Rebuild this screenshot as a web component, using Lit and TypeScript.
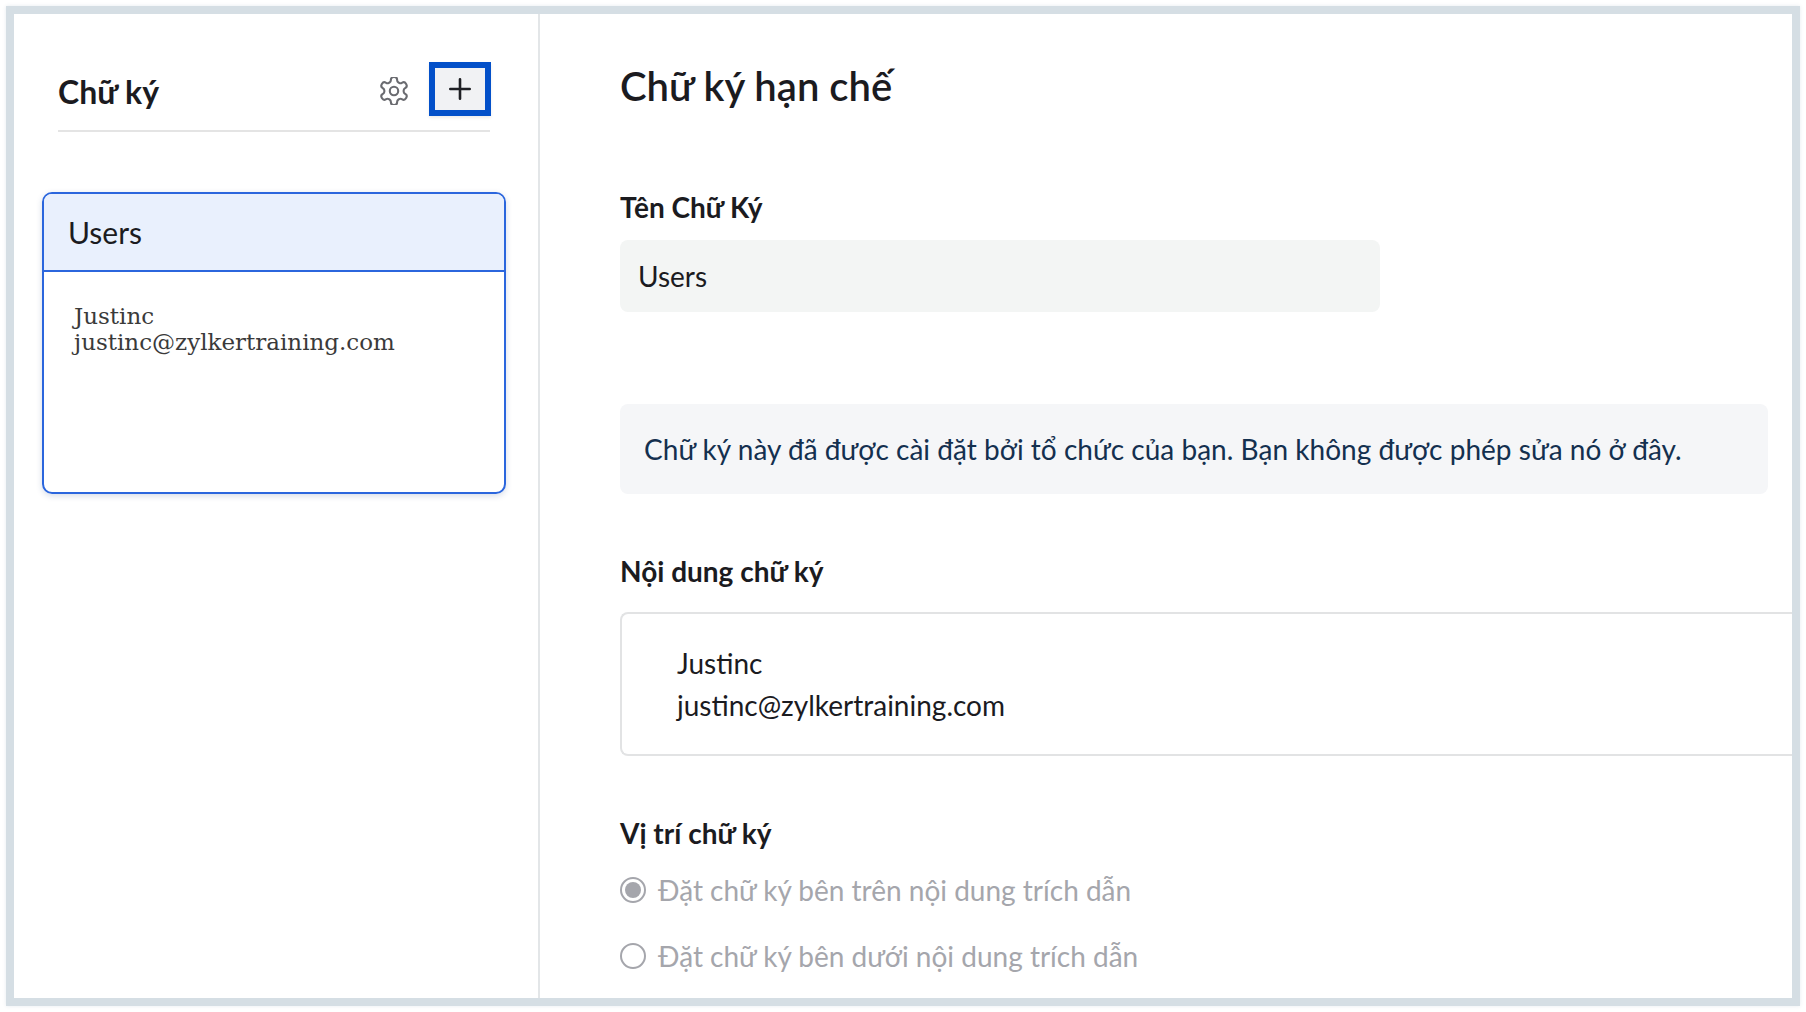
import { LitElement, html, css } from "lit";
import { customElement } from "lit/decorators.js";

@customElement("app-root")
export class AppRoot extends LitElement {
  static styles = css`
    :host { display: block; width: 1806px; height: 1012px; background: #fff; font-family: Lato, "Noto Sans", sans-serif; color: #1b1b1f; overflow: hidden; }
    * { box-sizing: border-box; }
    .page { width: 1806px; height: 1012px; padding: 6px; }
    .frame { width: 1794px; height: 1000px; border: 8px solid #d5dee4; display: flex; overflow: hidden; background: #fff; box-shadow: 0 0 4px rgba(213,222,228,.6); }
    .side { width: 526px; flex: none; border-right: 2px solid #e3e6e8; padding: 48px 32px 0 28px; }
    .side-head { margin: 0 16px; height: 70px; border-bottom: 2px solid #e4e4e4; display: flex; align-items: flex-start; }
    .side-title { font-size: 32px; line-height: 54px; font-weight: 700; flex: 1; margin-top: 3px; }
    .gear { width: 28px; height: 28px; margin: 15px 21px 0 0; display: block; }
    .add { width: 62px; height: 54px; margin-right: -1px; border: 6px solid #0350c9; background: #f1f2f4; display: flex; align-items: center; justify-content: center; box-shadow: 0 2px 3px rgba(0,0,0,.08); }
    .add svg { width: 22px; height: 22px; display: block; }
    .card { margin-top: 60px; height: 302px; border: 2px solid #2b66dd; border-radius: 10px; box-shadow: 0 2px 6px rgba(30,60,120,.18); overflow: hidden; width: 464px; }
    .card-head { height: 78px; background: #e9f0fd; border-bottom: 2px solid #2b66dd; padding-left: 24px; font-size: 30px; line-height: 76px; }
    .card-body { padding: 31px 0 0 30px; font-family: "DejaVu Serif", serif; font-size: 23px; line-height: 26px; color: #3a3a3a; }
    .main { flex: 1; min-width: 0; padding: 0 0 0 80px; }
    h1 { margin: 42px 0 0; font-size: 40px; line-height: 60px; font-weight: 600; }
    .label { font-size: 28px; line-height: 36px; font-weight: 700; }
    .l1 { margin-top: 73px; }
    .input { margin-top: 15px; width: 760px; height: 72px; background: #f3f5f4; border-radius: 8px; padding-left: 18px; font-size: 28px; line-height: 72px; }
    .notice { margin-top: 92px; width: 1148px; height: 90px; background: #f5f6f8; border-radius: 8px; padding-left: 24px; font-size: 28px; line-height: 90px; color: #14304f; white-space: nowrap; letter-spacing: .03px; }
    .l2 { margin-top: 59px; }
    .sig { margin-top: 23px; height: 144px; border: 2px solid #e2e3e4; border-right: 0; border-radius: 8px 0 0 8px; padding: 28px 0 0 55px; font-size: 28px; line-height: 42px; }
    .l3 { margin-top: 59px; }
    .radio { display: flex; align-items: center; color: #a5a6ac; font-size: 28px; line-height: 40px; gap: 12px; }
    .r1 { margin-top: 19px; }
    .r2 { margin-top: 26px; }
    .dot { width: 26px; height: 26px; border-radius: 50%; border: 2px solid #a5a6ac; display: flex; align-items: center; justify-content: center; flex: none; }
    .dot i { width: 16px; height: 16px; border-radius: 50%; background: #a5a6ac; display: block; }
  `;

  render() {
    return html`
      <div class="page"><div class="frame">
        <aside class="side">
          <div class="side-head">
            <div class="side-title">Chữ ký</div>
            <svg class="gear" viewBox="2 2 20 20" fill="none" stroke="#6a6b70" stroke-width="1.5" stroke-linejoin="round">
              <circle cx="12" cy="12" r="3"/>
              <path d="M12.22 2h-.44a2 2 0 0 0-2 2v.18a2 2 0 0 1-1 1.73l-.43.25a2 2 0 0 1-2 0l-.15-.08a2 2 0 0 0-2.73.73l-.22.38a2 2 0 0 0 .73 2.73l.15.1a2 2 0 0 1 1 1.72v.51a2 2 0 0 1-1 1.74l-.15.09a2 2 0 0 0-.73 2.73l.22.38a2 2 0 0 0 2.73.73l.15-.08a2 2 0 0 1 2 0l.43.25a2 2 0 0 1 1 1.73V20a2 2 0 0 0 2 2h.44a2 2 0 0 0 2-2v-.18a2 2 0 0 1 1-1.73l.43-.25a2 2 0 0 1 2 0l.15.08a2 2 0 0 0 2.73-.73l.22-.39a2 2 0 0 0-.73-2.73l-.15-.08a2 2 0 0 1-1-1.74v-.5a2 2 0 0 1 1-1.74l.15-.09a2 2 0 0 0 .73-2.73l-.22-.38a2 2 0 0 0-2.73-.73l-.15.08a2 2 0 0 1-2 0l-.43-.25a2 2 0 0 1-1-1.73V4a2 2 0 0 0-2-2z"/>
            </svg>
            <div class="add"><svg viewBox="0 0 22 22" stroke="#1f2024" stroke-width="2.6" stroke-linecap="round"><path d="M11 1.3v19.4M1.3 11h19.4"/></svg></div>
          </div>
          <div class="card">
            <div class="card-head">Users</div>
            <div class="card-body">Justinc<br>justinc@zylkertraining.com</div>
          </div>
        </aside>
        <main class="main">
          <h1>Chữ ký hạn chế</h1>
          <div class="label l1">Tên Chữ Ký</div>
          <div class="input">Users</div>
          <div class="notice">Chữ ký này đã được cài đặt bởi tổ chức của bạn. Bạn không được phép sửa nó ở đây.</div>
          <div class="label l2">Nội dung chữ ký</div>
          <div class="sig">Justinc<br>justinc@zylkertraining.com</div>
          <div class="label l3">Vị trí chữ ký</div>
          <div class="radio r1"><span class="dot"><i></i></span>Đặt chữ ký bên trên nội dung trích dẫn</div>
          <div class="radio r2"><span class="dot"></span>Đặt chữ ký bên dưới nội dung trích dẫn</div>
        </main>
      </div></div>
    `;
  }
}
